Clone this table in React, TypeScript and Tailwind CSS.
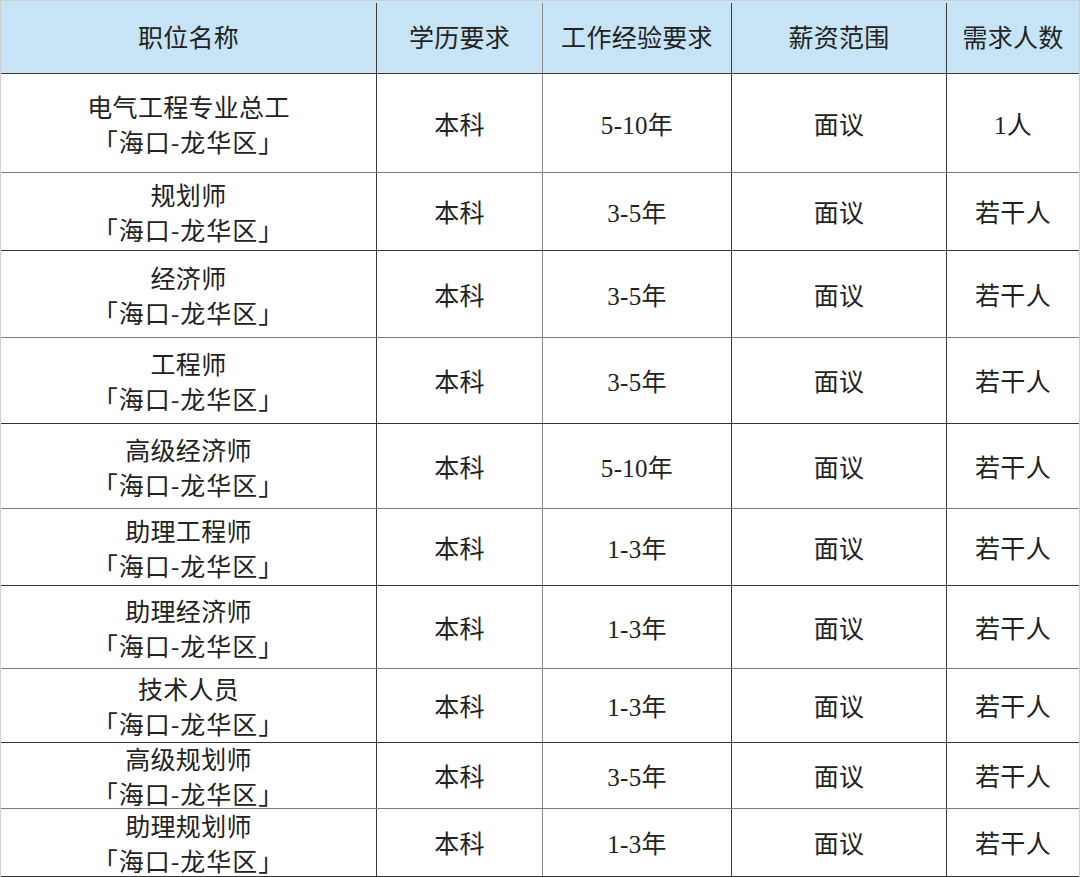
import React from "react";

const rows: { name: string; exp: string; num: string; h: string }[] = [
  { name: "电气工程专业总工", exp: "5-10年", num: "1人", h: "h-[99px]" },
  { name: "规划师", exp: "3-5年", num: "若干人", h: "h-[78px]" },
  { name: "经济师", exp: "3-5年", num: "若干人", h: "h-[87px]" },
  { name: "工程师", exp: "3-5年", num: "若干人", h: "h-[86px]" },
  { name: "高级经济师", exp: "5-10年", num: "若干人", h: "h-[85px]" },
  { name: "助理工程师", exp: "1-3年", num: "若干人", h: "h-[77px]" },
  { name: "助理经济师", exp: "1-3年", num: "若干人", h: "h-[83px]" },
  { name: "技术人员", exp: "1-3年", num: "若干人", h: "h-[74px]" },
  { name: "高级规划师", exp: "3-5年", num: "若干人", h: "h-[66px]" },
  { name: "助理规划师", exp: "1-3年", num: "若干人", h: "h-[68px]" },
];

const cell = "flex items-center justify-center text-center border-r border-[#3a3a3a]";

export default function App() {
  return (
    <div
      className="w-[1080px] h-[877px] bg-white text-[#222] text-[25px] leading-[33px] tracking-[0.3px] overflow-hidden"
      style={{ fontFamily: '"Liberation Serif", "Noto Sans CJK SC", serif' }}
    >
      <div className="border-l border-t border-r border-[#cfcfcf] w-[1080px]">
        <div className="flex h-[73px] bg-[#c6e4f6] border-b border-[#3a3a3a] pt-[2px]">
          <div className={`${cell} w-[376px]`}>职位名称</div>
          <div className={`${cell} w-[166px] border-[#8a8a8a]`}>学历要求</div>
          <div className={`${cell} w-[189px]`}>工作经验要求</div>
          <div className={`${cell} w-[215px]`}>薪资范围</div>
          <div className="flex items-center justify-center flex-1">需求人数</div>
        </div>
        {rows.map((r, i) => (
          <div
            key={i}
            className={`flex ${r.h} border-b ${i % 2 === 0 ? "border-[#7a7a7a]" : "border-[#333]"}`}
          >
            <div className={`${cell} w-[376px] flex-col pt-[3px]`}>
              <div>{r.name}</div>
              <div
                className="tracking-[1px]"
                style={{ fontFamily: '"Noto Sans CJK SC", sans-serif' }}
              >
                「海口-龙华区」
              </div>
            </div>
            <div className={`${cell} w-[166px] border-[#8a8a8a] pt-[4px]`}>本科</div>
            <div className={`${cell} w-[189px] pt-[4px]`}>{r.exp}</div>
            <div className={`${cell} w-[215px] pt-[4px]`}>面议</div>
            <div className="flex items-center justify-center flex-1 pt-[4px]">{r.num}</div>
          </div>
        ))}
      </div>
    </div>
  );
}
